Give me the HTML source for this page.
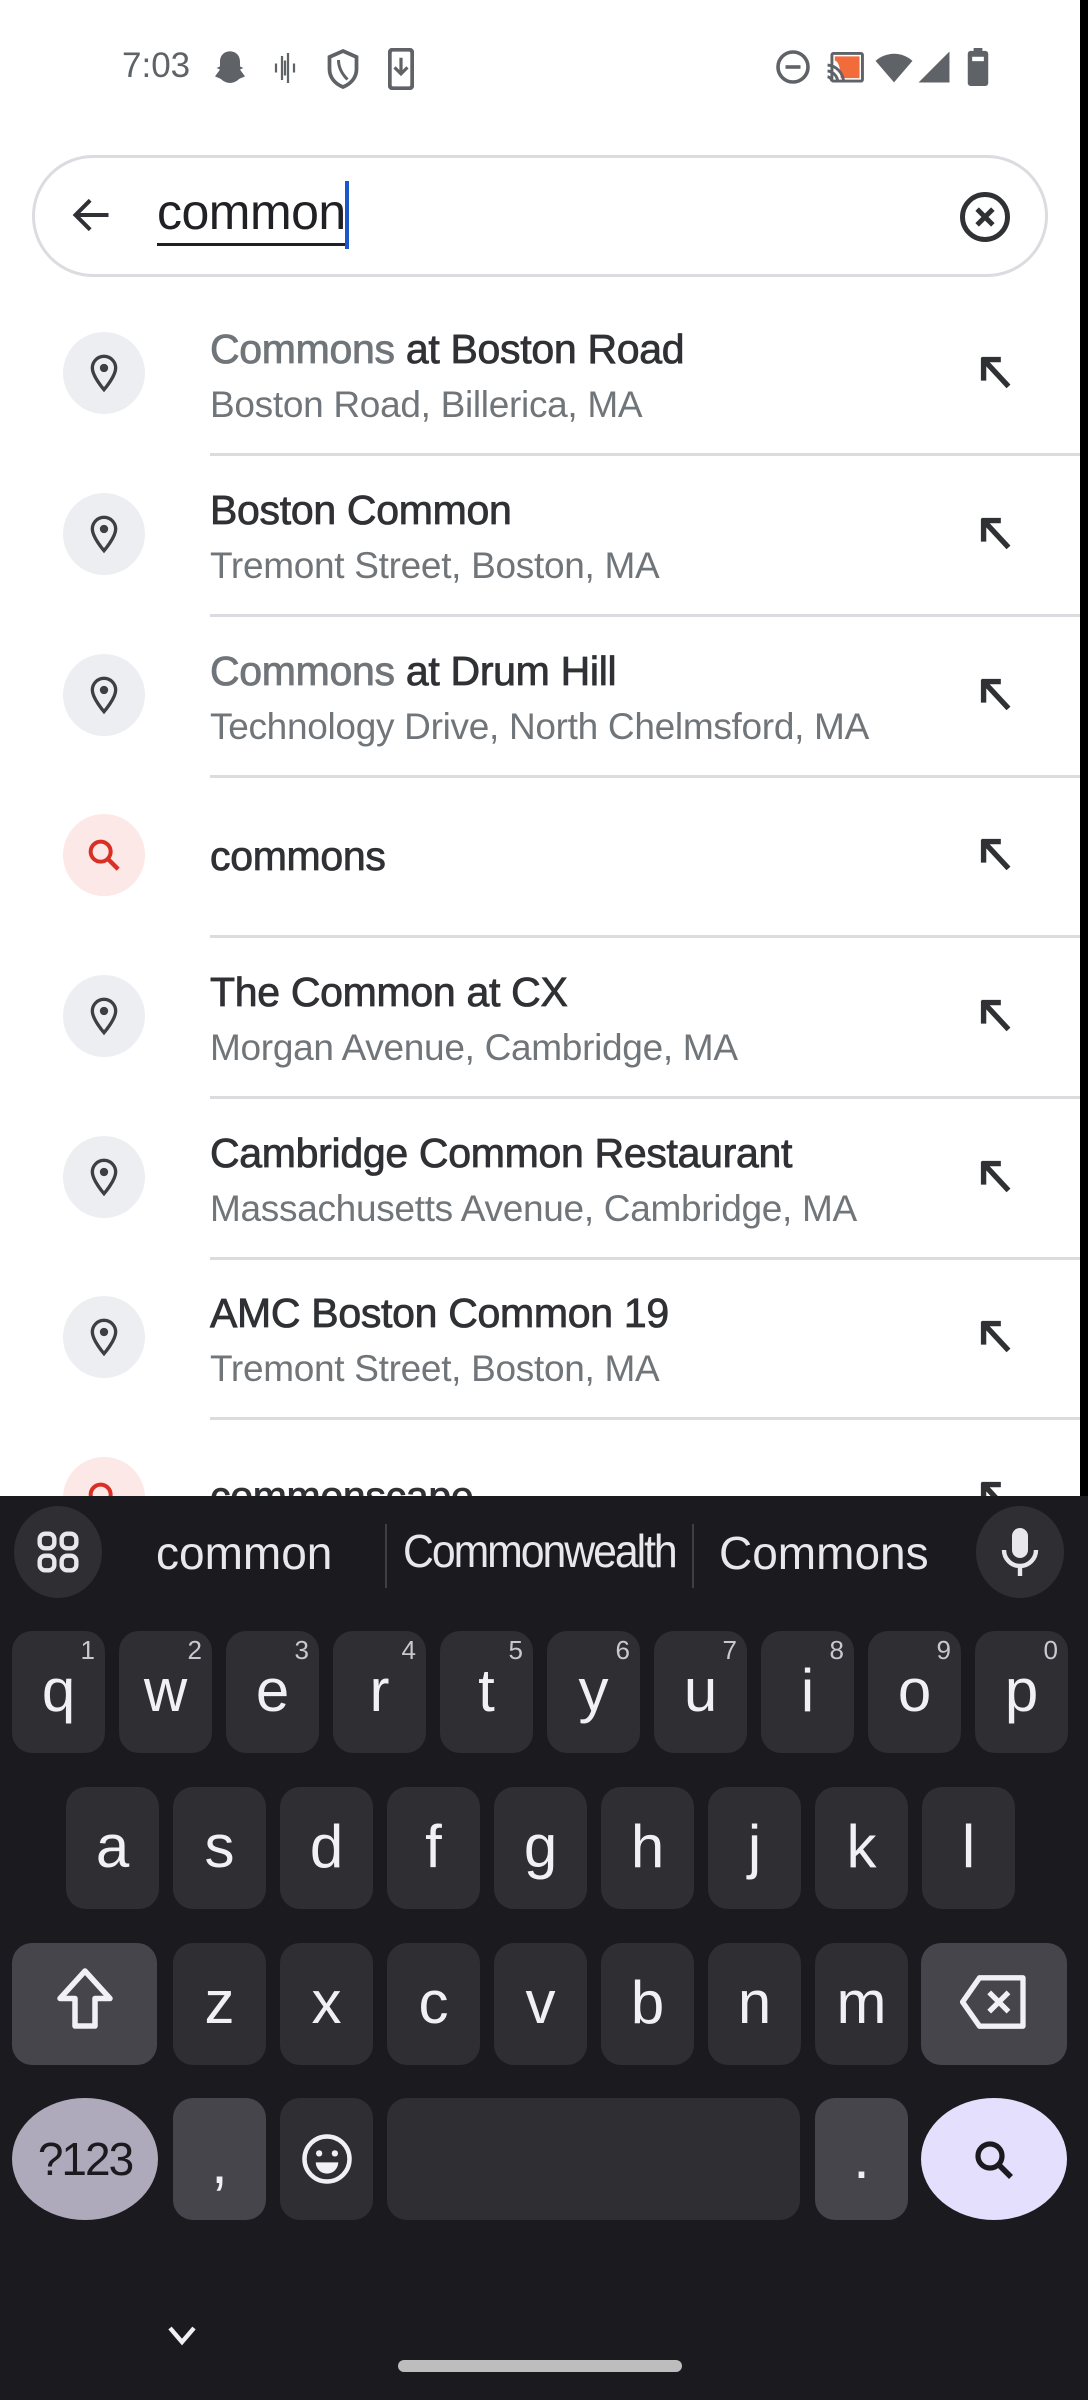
<!DOCTYPE html>
<html><head><meta charset="utf-8">
<style>
*{margin:0;padding:0;box-sizing:border-box}
body{width:1088px;height:2400px;overflow:hidden;background:#fff;font-family:"Liberation Sans",sans-serif;position:relative}
.a{position:absolute}
.circ{position:absolute;left:63px;width:82px;height:82px;border-radius:50%;background:#eceef1}
.t{position:absolute;left:210px;font-size:41px;color:#303134;white-space:nowrap;letter-spacing:-0.3px;-webkit-text-stroke:0.8px #303134}
.t .g{color:#70757a;-webkit-text-stroke:0.8px #70757a}
.s{position:absolute;left:210px;font-size:37px;color:#70757a;white-space:nowrap;letter-spacing:-0.3px}
.div{position:absolute;left:210px;width:870px;height:3px;background:#dadce0}
.arr{position:absolute;left:974px;width:46px;height:46px}
.kb{position:absolute;left:0;top:1496px;width:1088px;height:904px;background:#1b1a1f}
.k{position:absolute;width:93px;height:122px;border-radius:20px;background:#2f2e33;color:#f1f0f4;font-size:60px;text-align:center;line-height:120px}
.k sup{position:absolute;right:10px;top:6px;font-size:26px;line-height:26px;color:#c9c8ce}
.fk{background:#46454b}
</style></head><body>
<div class="a" style="left:122px;top:46px;font-size:35px;color:#5f6368">7:03</div>
<svg class="a" style="left:210px;top:48px" width="40" height="40" viewBox="0 0 24 24"><path d="M12 2c-4 0-6 3-6 6v3l-2 1 2 1-3 4c2 1 3 1 4 2 1 1 3 2 5 2s4-1 5-2c1-1 2-1 4-2l-3-4 2-1-2-1V8c0-3-2-6-6-6z" fill="#5f6368"/></svg>
<svg class="a" style="left:270px;top:50px" width="30" height="36" viewBox="0 0 20 24"><path d="M4 9v6M8 4v16M10 7v10M12 2v20M16 9v6" stroke="#5f6368" stroke-width="1.5"/></svg>
<svg class="a" style="left:325px;top:48px" width="36" height="42" viewBox="0 0 24 28"><path d="M12 2l9 4v8c0 6-4 10-9 12-5-2-9-6-9-12V6z" fill="none" stroke="#5f6368" stroke-width="2.5"/><path d="M9 8c0 6 3 10 6 13" fill="none" stroke="#5f6368" stroke-width="2"/></svg>
<svg class="a" style="left:388px;top:48px" width="26" height="42" viewBox="0 0 16 26"><rect x="1" y="1" width="14" height="24" rx="2" fill="none" stroke="#5f6368" stroke-width="2.5"/><path d="M8 6v10M4 12l4 4 4-4" stroke="#5f6368" stroke-width="2" fill="none"/></svg>
<svg class="a" style="left:775px;top:49px" width="36" height="36" viewBox="0 0 24 24"><circle cx="12" cy="12" r="10" fill="none" stroke="#5f6368" stroke-width="2.4"/><path d="M7 12h10" stroke="#5f6368" stroke-width="2.4"/></svg>
<svg class="a" style="left:826px;top:52px" width="38" height="32" viewBox="0 0 26 22"><rect x="4" y="1" width="21" height="19" rx="1" fill="none" stroke="#5f6368" stroke-width="2"/><path d="M6 3h17v15H10C10 10 8 6 6 6z" fill="#f26b3a"/><path d="M1 9a12 12 0 0 1 11 11M1 13a8 8 0 0 1 7 7M1 17a4 4 0 0 1 3 3" fill="none" stroke="#5f6368" stroke-width="2"/></svg>
<svg class="a" style="left:874px;top:50px" width="40" height="34" viewBox="0 0 26 22"><path d="M13 21L1 7a18 18 0 0 1 24 0z" fill="#5f6368"/></svg>
<svg class="a" style="left:917px;top:50px" width="34" height="34" viewBox="0 0 22 22"><path d="M21 1v20H1z" fill="#5f6368"/></svg>
<svg class="a" style="left:967px;top:48px" width="22" height="38" viewBox="0 0 14 26"><rect x="4" y="0" width="6" height="3" fill="#5f6368"/><rect x="0" y="2" width="14" height="24" rx="2" fill="#5f6368"/><rect x="3" y="6" width="8" height="3" fill="#fff"/></svg>
<div class="a" style="left:1080px;top:0;width:8px;height:1496px;background:#000"></div>

<div class="a" style="left:32px;top:155px;width:1016px;height:122px;border-radius:61px;border:3px solid #dadce0;background:#fff"></div>
<svg class="a" style="left:68px;top:193px" width="48" height="44" viewBox="0 0 24 24"><path d="M21 12H4M11 4l-8 8 8 8" fill="none" stroke="#303134" stroke-width="2.2"/></svg>
<div class="a" style="left:157px;top:182px;font-size:50px;color:#202124;border-bottom:3px solid #202124;line-height:60px;height:64px;letter-spacing:-0.5px">common</div>
<div class="a" style="left:345px;top:181px;width:4px;height:68px;background:#1a57c9"></div>
<svg class="a" style="left:958px;top:190px" width="54" height="54" viewBox="0 0 24 24"><circle cx="12" cy="12" r="10" fill="none" stroke="#303134" stroke-width="2.2"/><path d="M8.5 8.5l7 7M15.5 8.5l-7 7" stroke="#303134" stroke-width="2.2"/></svg>

<svg width="0" height="0" style="position:absolute"><defs>
<symbol id="pin" viewBox="0 0 24 24"><path d="M12 2a7 7 0 0 0-7 7c0 5 7 13 7 13s7-8 7-13a7 7 0 0 0-7-7z" fill="none" stroke="#3c4043" stroke-width="2"/><circle cx="12" cy="9" r="2.5" fill="#3c4043"/></symbol>
<symbol id="arw" viewBox="0 0 24 24"><path d="M5 5l13 14M5 4v12M4 5h10" fill="none" stroke="#303134" stroke-width="2.8"/></symbol>
</defs></svg>

<div class="circ" style="top:332px"></div><svg class="a" style="left:84px;top:353px" width="40" height="40"><use href="#pin"/></svg>
<div class="t" style="top:326px"><span class="g">Commons</span> at Boston Road</div>
<div class="s" style="top:384px">Boston Road, Billerica, MA</div>
<svg class="arr" style="top:350px"><use href="#arw"/></svg>
<div class="div" style="top:453px"></div>

<div class="circ" style="top:493px"></div><svg class="a" style="left:84px;top:514px" width="40" height="40"><use href="#pin"/></svg>
<div class="t" style="top:487px">Boston Common</div>
<div class="s" style="top:545px">Tremont Street, Boston, MA</div>
<svg class="arr" style="top:511px"><use href="#arw"/></svg>
<div class="div" style="top:614px"></div>

<div class="circ" style="top:654px"></div><svg class="a" style="left:84px;top:675px" width="40" height="40"><use href="#pin"/></svg>
<div class="t" style="top:648px"><span class="g">Commons</span> at Drum Hill</div>
<div class="s" style="top:706px">Technology Drive, North Chelmsford, MA</div>
<svg class="arr" style="top:672px"><use href="#arw"/></svg>
<div class="div" style="top:775px"></div>

<div class="circ" style="top:814px;background:#fce8e6"></div>
<svg class="a" style="left:84px;top:835px" width="40" height="40" viewBox="0 0 24 24"><circle cx="10" cy="10" r="6" fill="none" stroke="#d93025" stroke-width="2.4"/><path d="M14.5 14.5l6 6" stroke="#d93025" stroke-width="2.6"/></svg>
<div class="t" style="top:833px">commons</div>
<svg class="arr" style="top:832px"><use href="#arw"/></svg>
<div class="div" style="top:935px"></div>

<div class="circ" style="top:975px"></div><svg class="a" style="left:84px;top:996px" width="40" height="40"><use href="#pin"/></svg>
<div class="t" style="top:969px">The Common at CX</div>
<div class="s" style="top:1027px">Morgan Avenue, Cambridge, MA</div>
<svg class="arr" style="top:993px"><use href="#arw"/></svg>
<div class="div" style="top:1096px"></div>

<div class="circ" style="top:1136px"></div><svg class="a" style="left:84px;top:1157px" width="40" height="40"><use href="#pin"/></svg>
<div class="t" style="top:1130px">Cambridge Common Restaurant</div>
<div class="s" style="top:1188px">Massachusetts Avenue, Cambridge, MA</div>
<svg class="arr" style="top:1154px"><use href="#arw"/></svg>
<div class="div" style="top:1257px"></div>

<div class="circ" style="top:1296px"></div><svg class="a" style="left:84px;top:1317px" width="40" height="40"><use href="#pin"/></svg>
<div class="t" style="top:1290px">AMC Boston Common 19</div>
<div class="s" style="top:1348px">Tremont Street, Boston, MA</div>
<svg class="arr" style="top:1314px"><use href="#arw"/></svg>
<div class="div" style="top:1417px"></div>

<div class="circ" style="top:1457px;background:#fce8e6"></div>
<svg class="a" style="left:84px;top:1478px" width="40" height="40" viewBox="0 0 24 24"><circle cx="10" cy="10" r="6" fill="none" stroke="#d93025" stroke-width="2.4"/></svg>
<div class="t" style="top:1473px">commonscape</div>
<svg class="arr" style="top:1475px"><use href="#arw"/></svg>

<div class="kb">
  <div class="a" style="left:14px;top:10px;width:88px;height:92px;border-radius:50%;background:#2f2e33"></div>
  <svg class="a" style="left:36px;top:34px" width="44" height="44" viewBox="0 0 24 24"><g fill="none" stroke="#e8e7ec" stroke-width="2.4"><rect x="2" y="2" width="8" height="8" rx="3"/><rect x="14" y="2" width="8" height="8" rx="3"/><rect x="2" y="14" width="8" height="8" rx="3"/><rect x="14" y="14" width="8" height="8" rx="3"/></g></svg>
  <div class="a" style="left:156px;top:30px;font-size:46px;color:#e8e7ec">common</div>
  <div class="a" style="left:385px;top:28px;width:2px;height:64px;background:#3f3e44"></div>
  <div class="a" style="left:403px;top:28px;font-size:46px;color:#e8e7ec;letter-spacing:-2.2px;transform:scaleX(0.93);transform-origin:left">Commonwealth</div>
  <div class="a" style="left:692px;top:28px;width:2px;height:64px;background:#3f3e44"></div>
  <div class="a" style="left:719px;top:30px;font-size:46px;color:#e8e7ec">Commons</div>
  <div class="a" style="left:976px;top:10px;width:88px;height:92px;border-radius:50%;background:#2f2e33"></div>
  <svg class="a" style="left:996px;top:30px" width="48" height="52" viewBox="0 0 24 26"><rect x="8" y="1" width="8" height="15" rx="4" fill="#e8e7ec"/><path d="M4 12a8 8 0 0 0 16 0M12 20v5" fill="none" stroke="#e8e7ec" stroke-width="2.2"/></svg>

  <div class="k" style="left:12px;top:135px">q<sup>1</sup></div>
  <div class="k" style="left:119px;top:135px">w<sup>2</sup></div>
  <div class="k" style="left:226px;top:135px">e<sup>3</sup></div>
  <div class="k" style="left:333px;top:135px">r<sup>4</sup></div>
  <div class="k" style="left:440px;top:135px">t<sup>5</sup></div>
  <div class="k" style="left:547px;top:135px">y<sup>6</sup></div>
  <div class="k" style="left:654px;top:135px">u<sup>7</sup></div>
  <div class="k" style="left:761px;top:135px">i<sup>8</sup></div>
  <div class="k" style="left:868px;top:135px">o<sup>9</sup></div>
  <div class="k" style="left:975px;top:135px">p<sup>0</sup></div>
  <div class="k" style="left:66px;top:291px">a</div>
  <div class="k" style="left:173px;top:291px">s</div>
  <div class="k" style="left:280px;top:291px">d</div>
  <div class="k" style="left:387px;top:291px">f</div>
  <div class="k" style="left:494px;top:291px">g</div>
  <div class="k" style="left:601px;top:291px">h</div>
  <div class="k" style="left:708px;top:291px">j</div>
  <div class="k" style="left:815px;top:291px">k</div>
  <div class="k" style="left:922px;top:291px">l</div>
  <div class="k fk" style="left:12px;top:447px;width:145px"><svg style="margin-top:22px" width="60" height="72" viewBox="0 0 24 28"><path d="M12 2L2 13h6v11h8V13h6z" fill="none" stroke="#f1f0f4" stroke-width="2.2" stroke-linejoin="round"/></svg></div>
  <div class="k" style="left:173px;top:447px">z</div>
  <div class="k" style="left:280px;top:447px">x</div>
  <div class="k" style="left:387px;top:447px">c</div>
  <div class="k" style="left:494px;top:447px">v</div>
  <div class="k" style="left:601px;top:447px">b</div>
  <div class="k" style="left:708px;top:447px">n</div>
  <div class="k" style="left:815px;top:447px">m</div>
  <div class="k fk" style="left:921px;top:447px;width:146px"><svg style="margin-top:30px" width="68" height="58" viewBox="0 0 28 24"><path d="M8 2h18v20H8L1 12z" fill="none" stroke="#f1f0f4" stroke-width="2.2" stroke-linejoin="round"/><path d="M12 8l8 8M20 8l-8 8" stroke="#f1f0f4" stroke-width="2.2"/></svg></div>
  <div class="k" style="left:12px;top:602px;width:146px;border-radius:50%;background:#aeaabb;color:#1b1a1f;font-size:46px;line-height:122px;letter-spacing:-2px">?123</div>
  <div class="k fk" style="left:173px;top:602px;line-height:130px">,</div>
  <div class="k" style="left:280px;top:602px"><svg style="margin-top:34px" width="54" height="54" viewBox="0 0 24 24"><circle cx="12" cy="12" r="10" fill="none" stroke="#f1f0f4" stroke-width="2"/><circle cx="8.5" cy="9.5" r="1.4" fill="#f1f0f4"/><circle cx="15.5" cy="9.5" r="1.4" fill="#f1f0f4"/><path d="M7 13.5h10a5 5 0 0 1-10 0z" fill="#f1f0f4"/></svg></div>
  <div class="k" style="left:387px;top:602px;width:413px"></div>
  <div class="k fk" style="left:815px;top:602px;line-height:120px">.</div>
  <div class="k" style="left:921px;top:602px;width:146px;border-radius:50%;background:#e3dffc"><svg style="margin-top:38px" width="48" height="48" viewBox="0 0 24 24"><circle cx="10" cy="10" r="6" fill="none" stroke="#1b1a1f" stroke-width="2.6"/><path d="M14.5 14.5l6 6" stroke="#1b1a1f" stroke-width="2.8"/></svg></div>

  <svg class="a" style="left:166px;top:828px" width="32" height="24" viewBox="0 0 16 12"><path d="M2 2l6 7 6-7" fill="none" stroke="#f1f0f4" stroke-width="2.2"/></svg>
  <div class="a" style="left:398px;top:864px;width:284px;height:12px;border-radius:6px;background:#bdbdbd"></div>
</div>
</body></html>
